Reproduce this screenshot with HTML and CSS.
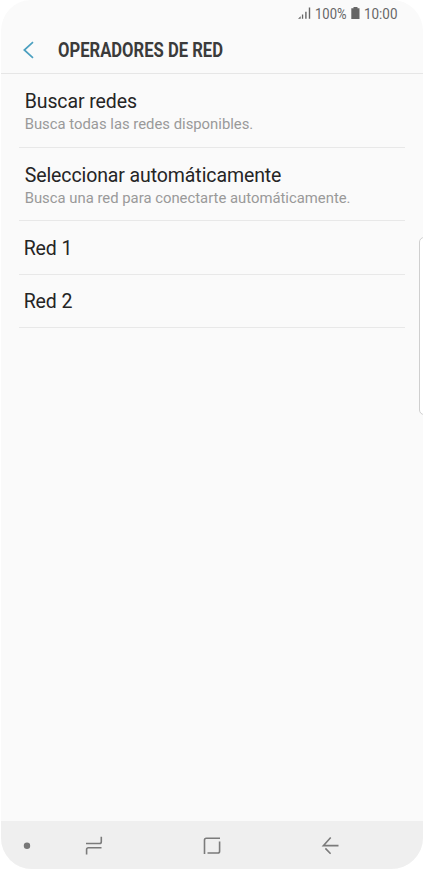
FILE: index.html
```html
<!DOCTYPE html>
<html lang="es">
<head>
<meta charset="utf-8">
<title>Operadores de red</title>
<link rel="stylesheet" href="styles.css">
</head>
<body>
<div class="phone">
  <div class="status">
    <svg class="signal" width="13" height="12" viewBox="0 0 13 12"><path d="M0 11.8 2.7 9.2V11.8ZM3.9 7.5H5.2V11.8H3.9ZM7.2 4.8H8.6V11.8H7.2ZM10.8 .4H12.2V11.8H10.8Z"/></svg>
    <svg class="percent" width="33" height="22"><text x="0" y="14" textLength="31.5" lengthAdjust="spacingAndGlyphs">100%</text></svg>
    <svg class="battery" width="9" height="12" viewBox="0 0 9 12"><path d="M2.5 0H6.5V1.2H8.5V12H.3V1.2H2.5Z"/></svg>
    <svg class="clock" width="37" height="22"><text x="0" y="14" textLength="33.5" lengthAdjust="spacingAndGlyphs">10:00</text></svg>
  </div>
  <header class="header">
    <svg class="back" width="12" height="18" viewBox="0 0 12 18"><path d="M10 1.2 1.3 9 10 16.8"/></svg>
    <svg class="title" width="200" height="30"><text x="0" y="22" textLength="165" lengthAdjust="spacingAndGlyphs">OPERADORES DE RED</text></svg>
  </header>
  <main class="list">
    <div class="row tall"><div class="name">Buscar redes</div><div class="note">Busca todas las redes disponibles.</div></div>
    <div class="row tall"><div class="name">Seleccionar automáticamente</div><div class="note">Busca una red para conectarte automáticamente.</div></div>
    <div class="row short"><div class="name">Red 1</div></div>
    <div class="row short"><div class="name">Red 2</div></div>
  </main>
  <nav class="nav">
    <svg width="423" height="49" viewBox="0 821 423 49">
      <circle cx="27" cy="845.7" r="3.2"/>
      <path d="M86 843.5H99.5Q101.3 843.5 101.3 841.7V836.8M101.5 847.8H88.4Q86.6 847.8 86.6 849.6V854.5"/>
      <path d="M220 838.2H206.3Q204.5 838.2 204.5 840V854M219.6 841.5V851.2Q219.6 853 217.8 853H207.5"/>
      <path d="M338.5 845.6H323.4L330.7 837.5M325.4 848.4 330.6 853.8"/>
    </svg>
  </nav>
  <div class="edge"></div>
</div>
</body>
</html>
```
FILE: styles.css
```css
* { box-sizing: border-box; }
body { margin: 0; background: #fff; font-family: Roboto, sans-serif; }
svg { display: block; flex: none; overflow: visible; }
.phone { position: relative; width: 423px; height: 870px; display: flex; flex-direction: column; background: #fafafa; border-radius: 31px 31px 32px 32px; overflow: hidden; border-left: 1px solid #fff; border-bottom: 1px solid #fff; }
.status { height: 27px; padding-left: 297px; display: flex; align-items: flex-start; fill: #666; font-size: 15.5px; }
.signal { margin-top: 7px; }
.percent { margin: 5px 0 0 4px; }
.battery { margin: 7px 0 0 3px; }
.clock { margin: 5px 0 0 4px; }
.header { height: 47px; padding: 0 0 0 22px; display: flex; align-items: center; border-bottom: 1px solid #e6e6e6; }
.back { fill: none; stroke: #4ca0c0; stroke-width: 1.7; }
.title { margin-left: 22.5px; fill: #3b3b3b; font-size: 19.5px; font-weight: 700; }
.list { flex: 1; padding: 0 18px; }
.row { border-bottom: 1px solid #e8e8e8; padding-left: 5.7px; white-space: nowrap; }
.tall { height: 73.7px; padding-top: 16px; }
.short { height: 53.2px; padding: 15.5px 0 0 4.7px; }
.name { font-size: 19.5px; line-height: 24px; letter-spacing: -0.1px; color: #252525; }
.note { font-size: 14.85px; line-height: 20px; color: #999; }
.nav { height: 48px; background: #efefef; margin-left: -1px; }
.nav path { fill: none; stroke: #7b7b7b; stroke-width: 1.6; }
.nav circle { fill: #777; }
.edge { position: absolute; left: 417.5px; top: 237px; width: 12px; height: 178px; border: 1px solid #cfcfcf; border-radius: 5px; background: #fff; }
```
